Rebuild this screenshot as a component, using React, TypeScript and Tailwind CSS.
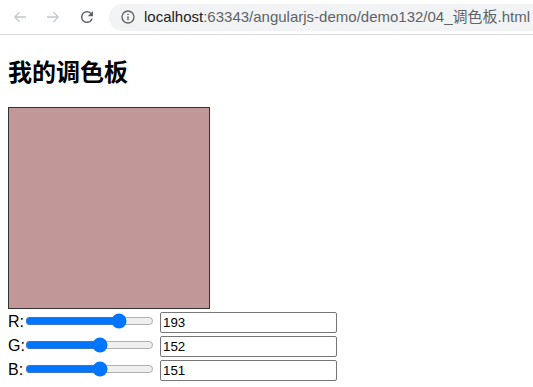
import { useState } from "react";

type Channel = "r" | "g" | "b";

function BrowserBar() {
  return (
    <div className="flex h-[35px] items-center border-b border-[#dadce0] bg-white pl-[11px]">
      {/* back */}
      <svg width="18" height="18" viewBox="0 0 24 24" fill="none" aria-hidden="true" className="mr-[15px]">
        <path d="M20 12H5m0 0l6.5 6.5M5 12l6.5-6.5" stroke="#c4c7ca" strokeWidth="1.8" />
      </svg>
      {/* forward */}
      <svg width="18" height="18" viewBox="0 0 24 24" fill="none" aria-hidden="true" className="mr-[16px]">
        <path d="M4 12h15m0 0l-6.5 6.5M19 12l-6.5-6.5" stroke="#c4c7ca" strokeWidth="1.8" />
      </svg>
      {/* reload */}
      <svg width="18" height="18" viewBox="0 0 24 24" aria-hidden="true" className="mr-[13px]">
        <path
          d="M17.65 6.35A7.96 7.96 0 0 0 12 4a8 8 0 1 0 7.73 10h-2.08A6 6 0 1 1 12 6c1.66 0 3.14.69 4.22 1.78L13 11h7V4l-2.35 2.35z"
          fill="#5f6368"
        />
      </svg>
      <div className="flex h-[27px] flex-1 items-center overflow-hidden whitespace-nowrap rounded-l-full bg-[#f1f3f4] pl-[11px]">
        <svg width="16" height="16" viewBox="0 0 24 24" fill="none" aria-hidden="true" className="mr-[8px] shrink-0">
          <circle cx="12" cy="12" r="9" stroke="#5f6368" strokeWidth="2" />
          <path d="M12 11v6M12 7v2" stroke="#5f6368" strokeWidth="2" />
        </svg>
        <span className="font-['Liberation_Sans','Noto_Sans_CJK_SC',sans-serif] text-[15px] text-[#202124]">
          localhost
          <span className="text-[#5f6368]">:63343/angularjs-demo/demo132/04_调色板.html</span>
        </span>
      </div>
    </div>
  );
}

export default function App() {
  const [rgb, setRgb] = useState({ r: 193, g: 152, b: 151 });

  function update(ch: Channel, v: string) {
    const n = Math.max(0, Math.min(255, Number(v) || 0));
    setRgb((c) => ({ ...c, [ch]: n }));
  }

  const rows: { ch: Channel; label: string }[] = [
    { ch: "r", label: "R:" },
    { ch: "g", label: "G:" },
    { ch: "b", label: "B:" },
  ];

  return (
    <div className="min-h-[387px] bg-white font-['Liberation_Sans','Noto_Sans_CJK_SC',sans-serif] text-black">
      <BrowserBar />

      <div className="px-2">
        <h2 className="my-[20px] h-[32px] font-['Noto_Sans_CJK_SC',sans-serif] text-[24px] font-bold leading-[32px]">
          我的调色板
        </h2>

        {/* color preview */}
        <div
          className="h-[202px] w-[202px] border border-[#333]"
          style={{ backgroundColor: `rgb(${rgb.r}, ${rgb.g}, ${rgb.b})` }}
        />

        {rows.map(({ ch, label }) => (
          <div key={ch} className="flex h-6 items-end text-[16px]">
            <span className="w-[15px] self-center pt-[2px]">{label}</span>
            <input
              type="range"
              min={0}
              max={255}
              value={rgb[ch]}
              onChange={(e) => update(ch, e.target.value)}
              className="mx-[2px] w-[129px] self-center"
            />
            <input
              type="text"
              value={rgb[ch]}
              onChange={(e) => update(ch, e.target.value)}
              className="ml-[4px] h-[21px] w-[177px] rounded-[2px] border border-[#767676] px-[2px] font-['Liberation_Sans',sans-serif] text-[13.33px]"
            />
          </div>
        ))}
      </div>
    </div>
  );
}
